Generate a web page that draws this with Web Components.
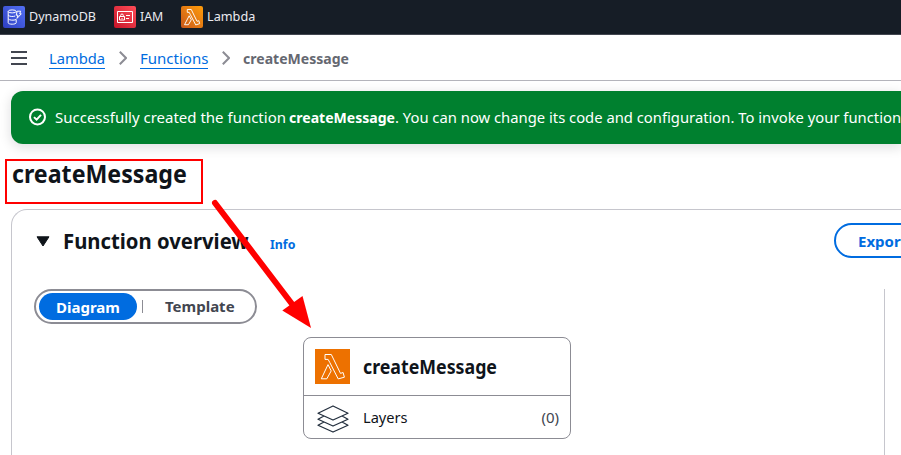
<!DOCTYPE html>
<html lang="en">
<head>
<meta charset="utf-8">
<title>createMessage</title>
<style>
html,body{margin:0;height:455px;overflow:hidden;background:#fff}
body{font:400 15px/20px "Noto Sans","Open Sans",sans-serif;color:#0f141a}
</style>
</head>
<body>
<lambda-page></lambda-page>
<script>
const def = (name, html) => {
  const t = document.createElement('template');
  t.innerHTML = html;
  customElements.define(name, class extends HTMLElement {
    constructor() {
      super();
      this.attachShadow({mode: 'open'}).append(t.content.cloneNode(true));
    }
  });
};

/* Inline text with adjustable glyph width (--sx). */
def('fit-text', `<style>
:host{display:inline-block;white-space:nowrap;transform:scaleX(var(--sx,1));transform-origin:0 50%}
</style><slot></slot>`);

def('service-link', `<style>
:host{display:flex;align-items:center;gap:4px;height:22px;font-size:13px;color:#ebebf0}
span{display:block;width:22px;height:22px;border-radius:2px;background:linear-gradient(45deg,var(--from),var(--to))}
::slotted(svg){display:block;width:22px;height:22px}
::slotted(fit-text){padding-bottom:2px}
</style><span><slot name="icon"></slot></span><slot></slot>`);

def('service-bar', `<style>
:host{display:flex;align-items:flex-start;box-sizing:border-box;height:35px;padding:6px 0 0 3px;background:#161d26;border-bottom:1px solid #424650}
.b{margin-left:18px}.c{margin-left:18px}
service-link{flex:none}
.a fit-text{width:67px}.b fit-text{width:23px}
</style>
<service-link class="a" style="--from:#2e3fc0;--to:#5270f5">
<svg slot="icon" viewBox="0 0 22 22" fill="none" stroke="#fff" stroke-width="1"><ellipse cx="9.2" cy="5.4" rx="4" ry="1.5"/><path d="M5.2 5.4v11.3c0 2 8 2 8 0v-3.2M5.2 9c.8 1.6 5 1.9 7 1M5.2 12.8c1 1.6 5.6 1.8 8 .7M13.2 5.4v1M14.2 5.2h3.5l-1 2.6h1.6l-4.3 4.6 1-3.2h-1.8z"/></svg>
<fit-text style="--sx:.965">DynamoDB</fit-text></service-link>
<service-link class="b" style="--from:#c61428;--to:#ff4d58">
<svg slot="icon" viewBox="0 0 22 22" fill="none" stroke="#fff" stroke-width="1"><path d="M3.5 5.5h15v11h-15zM5.5 10.5h5v3.5h-5zM6.7 10.5V9.3a1.3 1.3 0 0 1 2.6 0v1.2M8 12v1M12 9.5h4M12 12.5h3"/></svg>
<fit-text style="--sx:.95">IAM</fit-text></service-link>
<service-link class="c" style="--from:#c9571a;--to:#ff9d0a">
<svg slot="icon" viewBox="0 0 35 35" fill="none" stroke="#fff" stroke-width="1.5"><path d="M10 5.5h6.3l9.2 18.9 2.9-1 1.3 4.7-6.3 2L14.8 13.5l-1.7-3.4H10zM13 15.6l3.4 6.3-4.6 7.9H5.6z"/></svg>
<fit-text style="--sx:.975">Lambda</fit-text></service-link>`);

def('crumb-link', `<style>
:host{display:block;height:20px;line-height:20px;color:#006ce0;border-bottom:1px solid #006ce0}
</style><slot></slot>`);

def('crumb-bar', `<style>
:host{display:flex;align-items:center;box-sizing:border-box;height:46px;padding-left:11px;border-bottom:1px solid #b4b4bb;font-size:15px}
svg{display:block;flex:none}
.menu{margin-right:22px}
.chev{margin:0 13px 0 14px}
crumb-link{margin-top:1px;flex:none}
b{color:#656871}
</style>
<svg class="menu" width="16" height="16" viewBox="0 0 16 16" stroke="#424650" stroke-width="2"><path d="M0 2h16M0 8h16M0 14h16"/></svg>
<crumb-link style="width:56px"><fit-text style="--sx:.98">Lambda</fit-text></crumb-link>
<svg class="chev" width="8" height="14" viewBox="0 0 8 14" fill="none" stroke="#8c8c94" stroke-width="2"><path d="M.8.8 7 7 .8 13.2"/></svg>
<crumb-link style="width:68px"><fit-text>Functions</fit-text></crumb-link>
<svg class="chev" width="8" height="14" viewBox="0 0 8 14" fill="none" stroke="#8c8c94" stroke-width="2"><path d="M.8.8 7 7 .8 13.2"/></svg>
<b><fit-text style="--sx:.937">createMessage</fit-text></b>`);

def('flash-message', `<style>
:host{display:flex;align-items:center;height:53px;margin:10px 0 0 11px;padding-left:18px;box-sizing:border-box;border-radius:12px 0 0 12px;background:#00802f;color:#fff;box-shadow:0 3px 12px 1px rgba(0,7,22,.12);white-space:nowrap}
svg{display:block;flex:none;margin:0 9px 1px 0}
.a{width:234px}.b{width:106px}.c{width:506px}
fit-text{flex:none;padding-bottom:2px}
</style>
<svg width="17" height="18" viewBox="0 0 17 18" fill="none" stroke="#fff" stroke-width="2"><circle cx="8.5" cy="8.9" r="7.5"/><path d="m5 9.1 2.6 2.5L12 6.9"/></svg>
<fit-text class="a">Successfully created the function</fit-text>
<fit-text class="b" style="--sx:.937"><b>createMessage</b></fit-text>
<fit-text class="c" style="--sx:.986">. You can now change its code and configuration. To invoke your function</fit-text>`);

def('page-title', `<style>
:host{display:block;height:65px;padding:12px 0 0 12px;box-sizing:border-box;font-size:24.5px;line-height:35px;font-weight:700}
</style><slot></slot>`);

def('view-switch', `<style>
:host{display:flex;align-items:center;box-sizing:border-box;width:223px;height:35px;border:2px solid #8c8c94;border-radius:18px;padding-left:3px;font-weight:700;color:#424650}
.on{width:98px;height:27px;line-height:29px;border-radius:14px;background:#006ce0;color:#fff;text-align:center}
i{width:1px;height:13px;background:#8c8c94;margin:0 22px 0 5px}
.off{line-height:31px}
</style><div class="on"><slot name="on"></slot></div><i></i><div class="off"><slot name="off"></slot></div>`);

def('outline-button', `<style>
:host{display:block;box-sizing:border-box;width:110px;height:35px;line-height:32px;border:2px solid #006ce0;border-radius:18px;padding-left:22px;font-weight:700;color:#006ce0}
</style><slot></slot>`);

def('function-card', `<style>
:host{display:block;box-sizing:border-box;width:268px;height:102px;border:1px solid #8c8c94;border-radius:8px;background:#fff}
.top{display:flex;align-items:center;box-sizing:border-box;height:58px;padding-left:11px;border-bottom:1px solid #8c8c94;font-size:19.5px;font-weight:700}
.low{display:flex;align-items:center;height:42px;padding:0 11px 0 12.5px}
.low svg{margin:4px 14.5px 0 0}
svg{display:block;flex:none}
.top svg{background:#ed7100;margin-right:13px}
.n{margin-left:auto;color:#424650}
.low fit-text,.n{padding-bottom:1px}
</style>
<div class="top"><svg width="35" height="35" viewBox="0 0 35 35" fill="none" stroke="#fff" stroke-width="1"><path d="M10 5.5h6.3l9.2 18.9 2.6-.9 1.3 4.7-6.2 1.7L14.8 13.5l-1.7-3.1H10zM13 15.6l3.2 6.3-4.4 7.9H6.3z"/></svg><fit-text style="--sx:.911">createMessage</fit-text></div>
<div class="low"><svg width="32" height="28" viewBox="0 0 32 28" fill="none" stroke="#232f3e" stroke-width="1.25" stroke-linejoin="round"><path d="M16 1l15 7.2-15 6.8L1 8.2zM6.5 11.3 1 14.2 16 21l15-6.8-5.5-2.9M6.5 17.3 1 20.2 16 27l15-6.8-5.5-2.9"/></svg><fit-text style="--sx:.975">Layers</fit-text><span class="n">(0)</span></div>`);

def('function-overview', `<style>
:host{display:block;box-sizing:border-box;height:262px;margin-left:11px;border:1px solid #c6c6cd;border-width:1px 0 0 1px;border-radius:16px 0 0 0}
header{display:flex;align-items:center;height:35px;padding:13px 0 0 24px}
header svg{display:block;margin:1px 13px 0 0}
h2{margin:0 0 2px;font-size:22px;line-height:30px;width:207px;height:30px}
.info{font-size:12px;font-weight:700;color:#006ce0;line-height:20px;margin-top:8px}
outline-button{margin-left:auto;margin-right:-43px;flex:none}
.body{display:grid;grid-template-columns:851px 1fr;margin:31px 0 0 22px;height:180px}
.canvas{border-right:1px solid #c6c6cd}
function-card{margin:13px 0 0 269px}
</style>
<header><svg width="14" height="11" viewBox="0 0 14 11"><path d="M1 .8h12L7 10z" fill="#0f141a" stroke="#0f141a" stroke-linejoin="round"/></svg>
<h2><fit-text style="--sx:.922">Function overview</fit-text></h2><span class="info"><fit-text style="--sx:1.03">Info</fit-text></span>
<outline-button>Export</outline-button></header>
<div class="body"><div class="canvas"><view-switch><span slot="on">Diagram</span><span slot="off">Template</span></view-switch><function-card></function-card></div></div>`);

/* Red highlight frame and arrow lying over the page. */
def('mark-up', `<style>
:host{position:absolute;left:0;top:0;width:901px;height:455px}
svg{display:block}
</style><svg width="901" height="455" viewBox="0 0 901 455"><rect x="6" y="160" width="196" height="43" fill="none" stroke="#f00" stroke-width="2"/><path d="M215 203 292 304" stroke="#f00" stroke-width="6" stroke-linecap="round"/><path d="M311 328 282.3 310.5 302.5 296z" fill="#f00"/></svg>`);

def('lambda-page', `<style>
:host{display:block;position:relative;width:901px;height:455px;overflow:hidden}
</style>
<service-bar></service-bar>
<crumb-bar></crumb-bar>
<flash-message></flash-message>
<page-title><fit-text style="--sx:.946">createMessage</fit-text></page-title>
<function-overview></function-overview>
<mark-up></mark-up>`);
</script>
</body>
</html>
